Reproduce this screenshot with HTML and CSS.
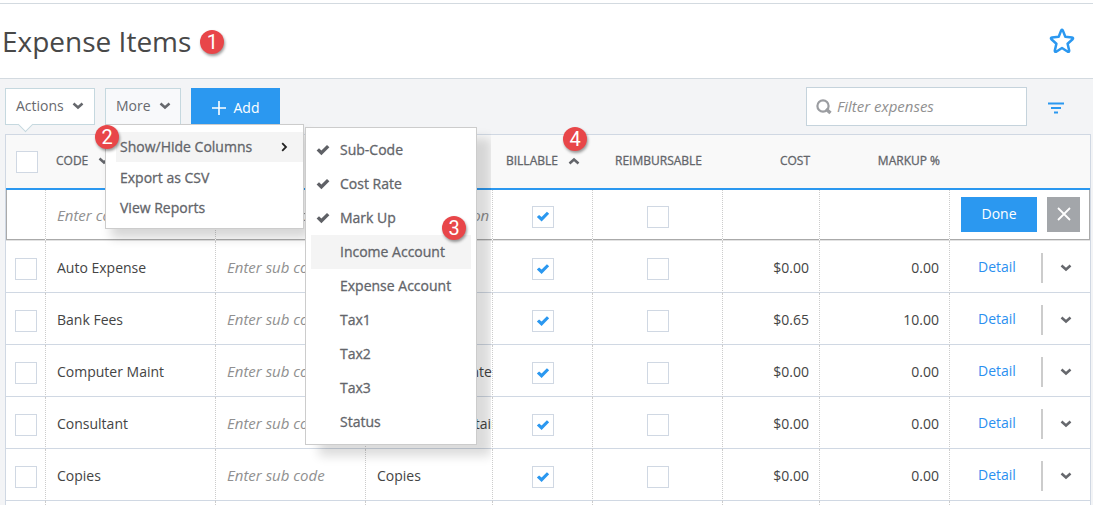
FILE: index.html
```
<!DOCTYPE html>
<html lang="en">
<head>
<meta charset="utf-8">
<title>Expense Items</title>
<link rel="stylesheet" href="styles.css">
</head>
<body>
<svg class="sprite" aria-hidden="true">
  <symbol id="chev" viewBox="0 0 12 8"><path d="M1.500 1.500 6 5.500 10.500 1.500" fill="none" stroke="currentColor" stroke-width="2.500"/></symbol>
  <symbol id="tick" viewBox="0 0 14 12"><path d="M.6 6.600 3 4.200 5.400 6.600 11 1 13.400 3.200 5.400 11.200Z" fill="currentColor"/></symbol>
</svg>
<div class="page">
  <header class="page-head">
    <h1 class="title">Expense Items</h1>
    <span class="badge badge-title">1</span>
    <button class="icon-btn star" aria-label="Add to favorites">
      <svg width="26" height="26" viewBox="0 0 26 26"><path d="M12.200 2.400Q13 1.200 13.800 2.400L16.300 8.800 23 9.500Q24.800 9.900 23.600 11.300L18.600 15.700 20.200 22.600Q20.300 24.200 18.800 23.700L13 20 7.200 23.700Q5.700 24.200 5.800 22.600L7.400 15.700 2.400 11.300Q1.200 9.900 3 9.500L9.700 8.800Z" fill="none" stroke="currentColor" stroke-width="2.500" stroke-linejoin="round"/></svg>
    </button>
  </header>
  <main class="content">
    <div class="toolbar">
      <button class="btn btn-actions">Actions <svg class="chev" aria-hidden="true"><use href="#chev"/></svg></button>
      <div class="more">
        <button class="btn btn-more">More <svg class="chev" aria-hidden="true"><use href="#chev"/></svg></button>
        <div class="menu" role="menu">
          <span class="badge badge-menu">2</span>
          <button class="menu-item active" role="menuitem">Show/Hide Columns
            <svg width="7" height="10" viewBox="0 0 7 10" aria-hidden="true"><path d="M1.200 1.200 5 5 1.200 8.800" fill="none" stroke="#222" stroke-width="1.800"/></svg></button>
          <button class="menu-item" role="menuitem">Export as CSV</button>
          <button class="menu-item" role="menuitem">View Reports</button>
        </div>
        <div class="submenu" role="menu">
          <button class="sub-item" role="menuitem"><svg class="tick" aria-hidden="true"><use href="#tick"/></svg>Sub-Code</button>
          <button class="sub-item" role="menuitem"><svg class="tick" aria-hidden="true"><use href="#tick"/></svg>Cost Rate</button>
          <button class="sub-item" role="menuitem"><svg class="tick" aria-hidden="true"><use href="#tick"/></svg>Mark Up</button>
          <button class="sub-item active" role="menuitem"><span class="tick"></span>Income Account</button>
          <button class="sub-item" role="menuitem"><span class="tick"></span>Expense Account</button>
          <button class="sub-item" role="menuitem"><span class="tick"></span>Tax1</button>
          <button class="sub-item" role="menuitem"><span class="tick"></span>Tax2</button>
          <button class="sub-item" role="menuitem"><span class="tick"></span>Tax3</button>
          <button class="sub-item" role="menuitem"><span class="tick"></span>Status</button>
          <span class="badge badge-sub">3</span>
        </div>
      </div>
      <button class="btn btn-add"><svg width="14" height="14" viewBox="0 0 14 14" aria-hidden="true"><path d="M7 0V14M0 7H14" stroke="#fff" stroke-width="1.600"/></svg>Add</button>
      <label class="search">
        <svg width="16" height="16" viewBox="0 0 16 16" aria-hidden="true"><circle cx="7" cy="7" r="5.600" fill="none" stroke="#9b9da1" stroke-width="2.200"/><path d="M10 10 14.500 14" stroke="#9b9da1" stroke-width="3.400"/></svg>
        <input class="search-input" type="text" placeholder="Filter expenses" aria-label="Filter expenses">
      </label>
      <button class="icon-btn filter" aria-label="Filter">
        <svg width="16" height="12" viewBox="0 0 16 12"><path d="M0 1.500H16M3 6H13M6 10.500H10" stroke="currentColor" stroke-width="2"/></svg>
      </button>
    </div>
    <table class="grid">
      <colgroup><col class="c-check"><col class="c-code"><col class="c-sub"><col class="c-desc"><col class="c-bill"><col class="c-reimb"><col class="c-cost"><col class="c-markup"><col class="c-act"></colgroup>
      <thead>
        <tr>
          <th class="sel"><input class="box" type="checkbox" aria-label="Select all"></th>
          <th>CODE <svg class="sort sort-down" aria-hidden="true"><use href="#chev"/></svg></th>
          <th aria-label="Sub-code"></th>
          <th aria-label="Description"></th>
          <th class="th-bill">BILLABLE <svg class="sort sort-up" aria-hidden="true"><use href="#chev"/></svg><span class="badge badge-head">4</span></th>
          <th class="mid">REIMBURSABLE</th>
          <th class="num">COST</th>
          <th class="num">MARKUP %</th>
          <th></th>
        </tr>
      </thead>
      <tbody>
        <tr class="edit">
          <td></td>
          <td><input class="field" placeholder="Enter code" aria-label="Code"></td>
          <td><input class="field" placeholder="Enter sub code" aria-label="Sub code"></td>
          <td><input class="field" placeholder="Enter description" aria-label="Description"></td>
          <td class="mid"><input class="box" type="checkbox" checked aria-label="Billable"></td>
          <td class="mid"><input class="box" type="checkbox" aria-label="Reimbursable"></td>
          <td></td><td></td>
          <td class="act"><div class="act-row"><button class="done">Done</button><button class="close" aria-label="Cancel"><svg width="14" height="14" viewBox="0 0 14 14"><path d="M1 1 13 13M13 1 1 13" stroke="#fff" stroke-width="1.800"/></svg></button></div></td>
        </tr>
        <tr>
          <td class="sel"><input class="box" type="checkbox" aria-label="Select Auto Expense"></td>
          <td>Auto Expense</td>
          <td><input class="field" placeholder="Enter sub code" aria-label="Sub code"></td>
          <td>Auto Expense</td>
          <td class="mid"><input class="box" type="checkbox" checked aria-label="Billable"></td>
          <td class="mid"><input class="box" type="checkbox" aria-label="Reimbursable"></td>
          <td class="num">$0.00</td><td class="num">0.00</td>
          <td class="act"><div class="act-row"><a class="detail" href="#">Detail</a><button class="row-menu" aria-label="More"><svg class="chev" aria-hidden="true"><use href="#chev"/></svg></button></div></td>
        </tr>
        <tr>
          <td class="sel"><input class="box" type="checkbox" aria-label="Select Bank Fees"></td>
          <td>Bank Fees</td>
          <td><input class="field" placeholder="Enter sub code" aria-label="Sub code"></td>
          <td>Bank Fees</td>
          <td class="mid"><input class="box" type="checkbox" checked aria-label="Billable"></td>
          <td class="mid"><input class="box" type="checkbox" aria-label="Reimbursable"></td>
          <td class="num">$0.65</td><td class="num">10.00</td>
          <td class="act"><div class="act-row"><a class="detail" href="#">Detail</a><button class="row-menu" aria-label="More"><svg class="chev" aria-hidden="true"><use href="#chev"/></svg></button></div></td>
        </tr>
        <tr>
          <td class="sel"><input class="box" type="checkbox" aria-label="Select Computer Maint"></td>
          <td>Computer Maint</td>
          <td><input class="field" placeholder="Enter sub code" aria-label="Sub code"></td>
          <td>Computer Maintenance</td>
          <td class="mid"><input class="box" type="checkbox" checked aria-label="Billable"></td>
          <td class="mid"><input class="box" type="checkbox" aria-label="Reimbursable"></td>
          <td class="num">$0.00</td><td class="num">0.00</td>
          <td class="act"><div class="act-row"><a class="detail" href="#">Detail</a><button class="row-menu" aria-label="More"><svg class="chev" aria-hidden="true"><use href="#chev"/></svg></button></div></td>
        </tr>
        <tr>
          <td class="sel"><input class="box" type="checkbox" aria-label="Select Consultant"></td>
          <td>Consultant</td>
          <td><input class="field" placeholder="Enter sub code" aria-label="Sub code"></td>
          <td>Consultants Retainer</td>
          <td class="mid"><input class="box" type="checkbox" checked aria-label="Billable"></td>
          <td class="mid"><input class="box" type="checkbox" aria-label="Reimbursable"></td>
          <td class="num">$0.00</td><td class="num">0.00</td>
          <td class="act"><div class="act-row"><a class="detail" href="#">Detail</a><button class="row-menu" aria-label="More"><svg class="chev" aria-hidden="true"><use href="#chev"/></svg></button></div></td>
        </tr>
        <tr>
          <td class="sel"><input class="box" type="checkbox" aria-label="Select Copies"></td>
          <td>Copies</td>
          <td><input class="field" placeholder="Enter sub code" aria-label="Sub code"></td>
          <td>Copies</td>
          <td class="mid"><input class="box" type="checkbox" checked aria-label="Billable"></td>
          <td class="mid"><input class="box" type="checkbox" aria-label="Reimbursable"></td>
          <td class="num">$0.00</td><td class="num">0.00</td>
          <td class="act"><div class="act-row"><a class="detail" href="#">Detail</a><button class="row-menu" aria-label="More"><svg class="chev" aria-hidden="true"><use href="#chev"/></svg></button></div></td>
        </tr>
        <tr><td></td><td></td><td></td><td></td><td></td><td></td><td></td><td></td><td></td></tr>
      </tbody>
    </table>
  </main>
</div>
</body>
</html>
```
FILE: styles.css
```
* { box-sizing: border-box; }
body { margin: 0; background: #fff; color: #444; font: 14px/20px "Open Sans", sans-serif; }
button, input { font: inherit; color: inherit; margin: 0; }
button { padding: 0; border: 0; background: none; cursor: pointer; }
svg { display: block; }
.sprite { position: absolute; width: 0; height: 0; }
.page { height: 100vh; overflow: hidden; display: flex; flex-direction: column; padding-top: 3px; }
.page-head { display: flex; align-items: center; flex: none; height: 76px; padding: 0 18px 0 2px; gap: 9px; border-top: 1px solid #d3dae0; border-bottom: 1px solid #d3dae0; }
.title { margin: 0; font-size: 28px; line-height: 38px; font-weight: 400; color: #484848; }
.badge { display: flex; align-items: center; justify-content: center; width: 24px; height: 24px; border-radius: 50%; background: #e84649; color: #fff; font: 20px/24px Roboto, sans-serif; box-shadow: 1px 2px 3px rgba(0, 0, 0, .4); z-index: 5; }
.badge-title { margin-top: 2px; }
.icon-btn { color: #2b98f0; }
.star { margin-left: auto; }
.content { flex: auto; padding: 9px 2px 0 5px; background: #f3f4f6; }
.toolbar { display: flex; align-items: flex-start; height: 46px; padding-right: 27px; }
.btn { display: flex; align-items: center; height: 37px; border: 1px solid #c5d8df; background: #fff; color: #67696e; }
.chev { width: 12px; height: 8px; margin-top: 1px; color: #66686d; }
.btn-actions { position: relative; width: 90px; padding-left: 10px; gap: 8px; padding-bottom: 2px; }
/* notch that points at the select-all box */
.btn-actions::after { content: ""; position: absolute; left: 14px; top: 30px; width: 10px; height: 10px; background: #fff; border: solid #c5d8df; border-width: 0 1px 1px 0; transform: rotate(45deg); }
.more { position: relative; margin: 0 10px; }
.btn-more { width: 76px; padding-left: 10px; gap: 8px; padding-bottom: 2px; background: #f8f9fb; }
.btn-add { width: 89px; justify-content: center; gap: 8px; border: 0; background: #2b98f0; color: #fff; padding-top: 2px; }
.search { display: flex; align-items: center; width: 221px; height: 39px; margin: -1px 21px 0 auto; padding: 0 9px; gap: 5px; background: #fff; border: 1px solid #c5d3dc; }
.search-input { flex: 1; min-width: 0; padding: 0; border: 0; outline: 0; background: none; }
.search-input::placeholder, .field::placeholder { color: #909090; opacity: 1; font-style: italic; font-size: 15px; }
.filter { padding-top: 14px; }

.menu, .submenu { position: absolute; background: #fff; border: 1px solid #ccc; z-index: 4; color: #63656a; -webkit-text-stroke: .3px; }
.menu .badge, .submenu .badge, .badge-head { position: absolute; -webkit-text-stroke: 0; }
.menu { top: 36px; left: 0; width: 199px; padding: 7px 0 5px 10px; box-shadow: 6px 9px 10px rgba(0, 0, 0, .16); }
.menu-item { display: flex; align-items: center; justify-content: space-between; width: 100%; height: 30px; padding: 0 15px 0 4px; }
.menu-item.active { margin-bottom: 1px; }
.menu .badge-menu { left: -11px; top: 0; }
.active { background: #f4f4f4; }
.submenu { top: 39px; left: 200px; width: 172px; padding: 5px; box-shadow: 14px 11px 10px rgba(0, 0, 0, .14); clip-path: inset(0 -14px -30px 0); }
.sub-item { display: flex; align-items: center; width: 100%; height: 34px; padding-left: 5px; gap: 10px; }
.tick { width: 14px; height: 12px; color: #5f6166; }
.submenu .badge-sub { right: 10px; top: 88px; }

.grid { width: 100%; table-layout: fixed; border-collapse: separate; border-spacing: 0; border: 1px solid #d0d8e3; background: #fff; }
.c-check { width: 40px; }
.c-code { width: 170px; }
.c-sub { width: 150px; }
.c-bill { width: 100px; }
.c-reimb { width: 130px; }
.c-cost { width: 97px; }
.c-markup { width: 130px; }
.c-act { width: 140px; }
.grid th { height: 55px; padding: 0 0 2px 10px; border-bottom: 2px solid #2b98f0; background: #f9f9f9; color: #63656a; font-size: 12px; line-height: 16px; font-weight: 400; text-align: left; -webkit-text-stroke: .3px; }
.grid td { height: 52px; padding: 2px 0 0 11px; border-bottom: 1px solid #d0d8e3; border-right: 1px dotted #ccc; white-space: nowrap; overflow: hidden; }
.grid td:last-child { border-right: 0; }
.grid .th-bill { position: relative; padding-left: 13px; }
.badge-head { left: 70px; top: -8px; }
.sort { display: inline-block; width: 12px; height: 8px; margin-left: 7px; }
.sort-up { transform: rotate(180deg); }
.grid .mid { padding-left: 1px; text-align: center; }
.grid .num { padding: 0 10px 2px 0; text-align: right; }
.grid td.num { padding: 2px 10px 0 0; }
.grid td.sel { padding-left: 9px; }
.grid th.sel { padding-bottom: 0; }
.box { appearance: none; display: inline-grid; place-content: center; width: 22px; height: 22px; border: 1px solid #d0d8e3; background: #fff; vertical-align: middle; }
td .box { margin-top: 3px; }
.box:checked::before { content: ""; width: 14px; height: 12px; background: #2b98f0; clip-path: polygon(6% 55%, 22% 37%, 40% 54%, 78% 10%, 94% 27%, 40% 92%); }
.field { width: 100%; height: 24px; padding: 0; border: 0; outline: 0; background: none; }
.edit td { height: 51px; padding-top: 0; border-bottom-color: #e2e2e2; box-shadow: inset 0 -1px #aaa; }
.edit td:first-child { box-shadow: inset 1px -1px #aaa; }
.edit td:last-child { box-shadow: inset -1px -1px #aaa; }
.act-row { display: flex; align-items: center; }
.done { width: 76px; height: 35px; margin-right: 10px; background: #2b98f0; color: #fff; }
.close { display: grid; place-content: center; width: 33px; height: 35px; background: #a3a6aa; }
.edit .act { padding-bottom: 2px; }
.detail { padding: 0 25px 2px 17px; color: #2b8ff0; text-decoration: none; }
.row-menu { display: flex; align-items: center; height: 30px; padding-left: 17px; border-left: 2px solid #ccc; }
```
